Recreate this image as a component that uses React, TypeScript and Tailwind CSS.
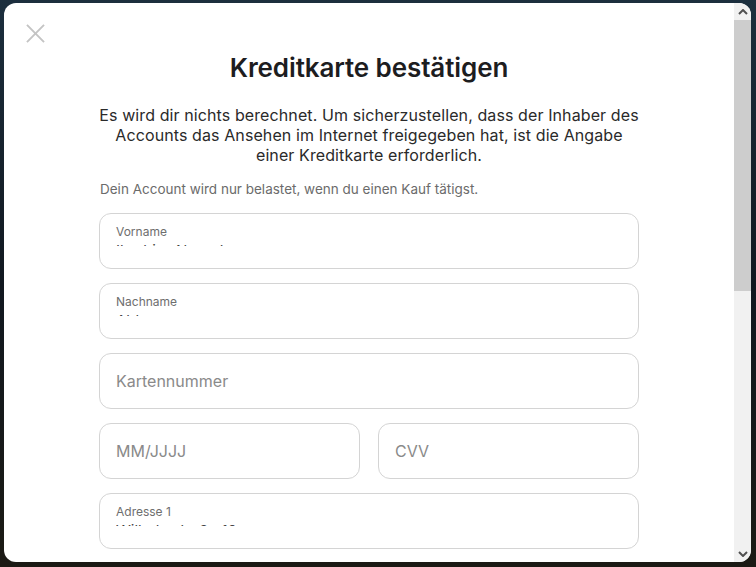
import React from 'react';

const font = { fontFamily: 'Inter, "Noto Sans", sans-serif' };

const FilledField = ({ label, value }: { label: string; value: string }) => (
  <div className="h-[56px] rounded-[12px] border border-[#d4d4d4] bg-white pl-[16px] pt-[11px]">
    <div className="text-[12px] leading-[14px] text-[#6e6e6e]">{label}</div>
    {/* value is clipped so only the tops of the letters show */}
    <div className="mt-[5px] h-[2px] overflow-hidden">
      <div className="text-[15px] leading-[15px] text-[#444] -mt-[1px]">{value}</div>
    </div>
  </div>
);

const EmptyField = ({ placeholder, className = '' }: { placeholder: string; className?: string }) => (
  <div
    className={`h-[56px] rounded-[12px] border border-[#d4d4d4] bg-white pl-[16px] flex items-center text-[16px] text-[#8a8a8a] ${className}`}
  >
    {placeholder}
  </div>
);

const App = () => {
  return (
    <div
      className="w-[756px] h-[567px] overflow-hidden bg-gradient-to-b from-[#1c2f3e] via-[#111820] to-[#1b1a14] pt-[3px] pl-[4px] pr-[5px] pb-[5px] flex"
      style={font}
    >
      <div className="flex-1 flex bg-white rounded-[12px] overflow-hidden">
        {/* Content */}
        <div className="relative flex-1 overflow-hidden">
          <button className="absolute left-[22px] top-[21px] w-[19px] h-[19px] text-[#c4c4c4]">
            <svg viewBox="0 0 20 20" className="w-[19px] h-[19px]" fill="none" stroke="currentColor" strokeWidth="2">
              <path d="M1 1 L19 19 M19 1 L1 19" />
            </svg>
          </button>

          <div className="w-[540px] ml-[95px] pt-[49px] flex flex-col">
            <h1 className="text-center text-[26px] leading-[32px] font-semibold text-[#1d1d1f] tracking-[-0.1px]">
              Kreditkarte bestätigen
            </h1>
            <p className="mt-[21px] text-center text-[16px] leading-[20px] tracking-[0.1px] text-[#2a2a2a]">
              Es wird dir nichts berechnet. Um sicherzustellen, dass der Inhaber des Accounts das Ansehen im Internet freigegeben hat, ist die Angabe einer Kreditkarte erforderlich.
            </p>
            <p className="mt-[15px] pl-[1px] text-[13.5px] leading-[18px] text-[#6b6b6b]">
              Dein Account wird nur belastet, wenn du einen Kauf tätigst.
            </p>

            <div className="mt-[15px] flex flex-col gap-[14px]">
              <FilledField label="Vorname" value="Ibrahim Ahmed" />
              <FilledField label="Nachname" value="Abbas" />
              <EmptyField placeholder="Kartennummer" />
              <div className="flex gap-[18px]">
                <EmptyField placeholder="MM/JJJJ" className="flex-1" />
                <EmptyField placeholder="CVV" className="flex-1" />
              </div>
              <FilledField label="Adresse 1" value="Wilhelmstraße 12" />
            </div>
          </div>
        </div>

        {/* Scrollbar */}
        <div className="w-[17px] bg-[#f1f1f1] flex flex-col items-center">
          <div className="h-[17px] flex items-center justify-center text-[#505050]">
            <svg viewBox="0 0 10 6" className="w-[10px] h-[6px]" fill="none" stroke="currentColor" strokeWidth="2">
              <path d="M1 5 L5 1 L9 5" />
            </svg>
          </div>
          <div className="w-[17px] h-[271px] bg-[#cdcdcd]" />
          <div className="flex-1" />
          <div className="h-[17px] flex items-center justify-center text-[#505050]">
            <svg viewBox="0 0 10 6" className="w-[10px] h-[6px]" fill="none" stroke="currentColor" strokeWidth="2">
              <path d="M1 1 L5 5 L9 1" />
            </svg>
          </div>
        </div>
      </div>
    </div>
  );
};

export default App;
